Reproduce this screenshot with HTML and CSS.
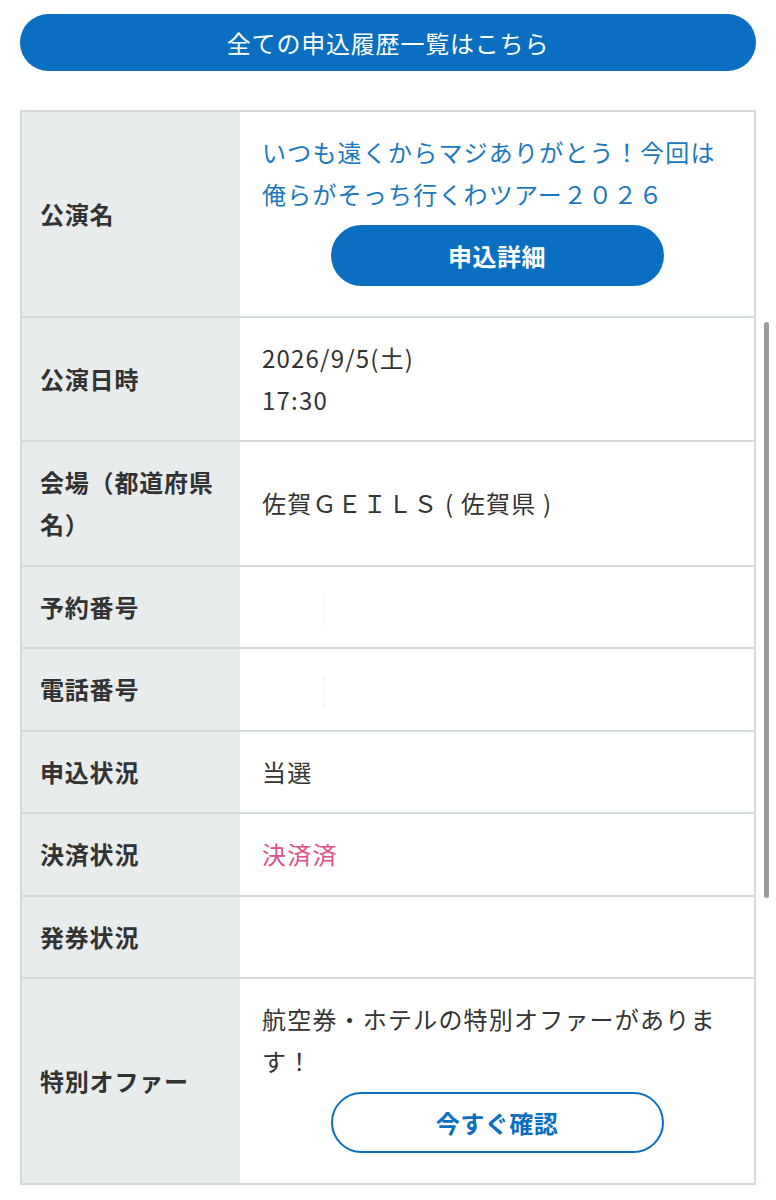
FILE: index.html
```html
<!DOCTYPE html>
<html lang="ja">
<head>
<meta charset="utf-8">
<title>申込詳細</title>
<link rel="stylesheet" href="styles.css">
</head>
<body>
<div class="page">
  <a class="history-btn" href="#">全ての申込履歴一覧はこちら</a>

  <div class="detail">
    <div class="row">
      <div class="label">公演名</div>
      <div class="value">
        <div class="title-link">いつも遠くからマジありがとう！今回は俺らがそっち行くわツアー２０２６</div>
        <div class="btn-wrap"><a class="btn btn-solid" href="#">申込詳細</a></div>
      </div>
    </div>
    <div class="row">
      <div class="label">公演日時</div>
      <div class="value"><div>2026/9/5(土)<br>17:30</div></div>
    </div>
    <div class="row">
      <div class="label">会場（都道府県名）</div>
      <div class="value"><div>佐賀ＧＥＩＬＳ ( 佐賀県 )</div></div>
    </div>
    <div class="row">
      <div class="label">予約番号</div>
      <div class="value"><div><span class="redacted"></span></div></div>
    </div>
    <div class="row">
      <div class="label">電話番号</div>
      <div class="value"><div><span class="redacted"></span></div></div>
    </div>
    <div class="row">
      <div class="label">申込状況</div>
      <div class="value"><div>当選</div></div>
    </div>
    <div class="row">
      <div class="label">決済状況</div>
      <div class="value paid"><div>決済済</div></div>
    </div>
    <div class="row">
      <div class="label">発券状況</div>
      <div class="value"></div>
    </div>
    <div class="row">
      <div class="label">特別オファー</div>
      <div class="value">
        <div>航空券・ホテルの特別オファーがあります！</div>
        <div class="btn-wrap"><a class="btn btn-outline" href="#">今すぐ確認</a></div>
      </div>
    </div>
  </div>
</div>
<div class="scrollbar"></div>
</body>
</html>
```

FILE: styles.css
```css
* { box-sizing: border-box; }

html, body {
  margin: 0;
  padding: 0;
  background: #ffffff;
}

body {
  font-family: "Noto Sans CJK JP", "Noto Sans", sans-serif;
  color: #333333;
  width: 776px;
  height: 1200px;
  overflow: hidden;
  position: relative;
}

.page {
  padding: 14px 20px 0 20px;
}

.history-btn {
  display: flex;
  align-items: center;
  justify-content: center;
  height: 57px;
  border-radius: 29px;
  background: #0a6fc1;
  color: #ffffff;
  font-size: 24px;
  letter-spacing: 0.8px;
  text-decoration: none;
}

.detail {
  margin-top: 39px;
  border: 2px solid #d5dbdb;
}

.row {
  display: flex;
  border-top: 2px solid #d5dbdb;
}

.row:first-child {
  border-top: none;
}

.label {
  width: 218px;
  flex-shrink: 0;
  background: #e8ecec;
  font-weight: 700;
  font-size: 24px;
  letter-spacing: 0.8px;
  line-height: 42px;
  padding: 19px 20px 19.5px 18px;
  display: flex;
  align-items: center;
}

.value {
  flex: 1;
  font-size: 24px;
  letter-spacing: 1.2px;
  line-height: 42px;
  padding: 19px 20px 19.5px 22px;
  min-height: 80.5px;
  display: flex;
  flex-direction: column;
  justify-content: center;
}

.title-link {
  color: #1b78c0;
}

.paid {
  color: #e2508c;
}

.redacted {
  display: inline-block;
  width: 1px;
  height: 30px;
  margin-left: 62px;
  vertical-align: middle;
  border-left: 1px dashed #eceeee;
}

.btn-wrap {
  display: flex;
  justify-content: center;
  padding: 10px 0 10px 0;
  margin-left: -2px;
}

.btn {
  display: flex;
  align-items: center;
  justify-content: center;
  width: 333px;
  height: 61px;
  border-radius: 31px;
  font-size: 24px;
  font-weight: 700;
  letter-spacing: 0.5px;
  text-decoration: none;
}

.btn-solid {
  background: #0a6fc1;
  color: #ffffff;
}

.btn-outline {
  background: #ffffff;
  color: #0a6fc1;
  border: 2px solid #0a6fc1;
}

.scrollbar {
  position: absolute;
  left: 764px;
  top: 322px;
  width: 5px;
  height: 576px;
  border-radius: 3px;
  background: #9a9a9a;
}
```
